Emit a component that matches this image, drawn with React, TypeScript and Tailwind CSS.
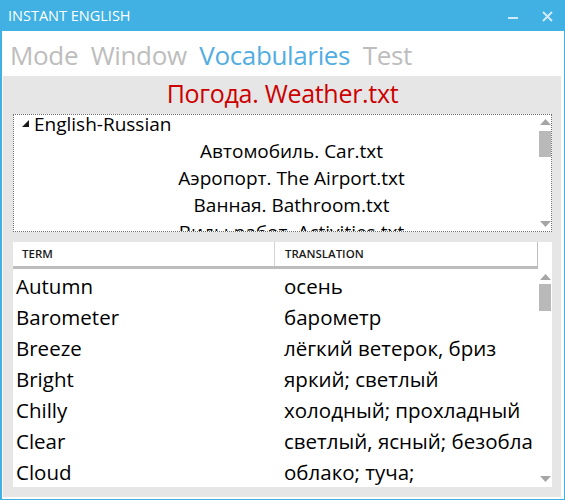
import React from "react";

function UpArrow() {
  return (
    <svg width="11" height="6" viewBox="0 0 11 6" className="block shrink-0">
      <polygon points="5.5,0 11,6 0,6" fill="#a6a6a6" />
    </svg>
  );
}
function DownArrow() {
  return (
    <svg width="11" height="6" viewBox="0 0 11 6" className="block shrink-0">
      <polygon points="0,0 11,0 5.5,6" fill="#a6a6a6" />
    </svg>
  );
}

const treeItems = [
  "Автомобиль. Car.txt",
  "Аэропорт. The Airport.txt",
  "Ванная. Bathroom.txt",
  "Виды работ. Activities.txt",
];

const rows: [string, string][] = [
  ["Autumn", "осень"],
  ["Barometer", "барометр"],
  ["Breeze", "лёгкий ветерок, бриз"],
  ["Bright", "яркий; светлый"],
  ["Chilly", "холодный; прохладный"],
  ["Clear", "светлый, ясный; безоблачный"],
  ["Cloud", "облако; туча;"],
];

export default function App() {
  return (
    <div className="w-[565px] h-[500px] flex flex-col bg-white overflow-hidden font-['Open_Sans','Noto_Sans',sans-serif] text-black">
      {/* Title bar */}
      <div className="h-[31px] shrink-0 bg-[#41b0e3] flex items-start">
        <span className="pl-[8px] text-[14.5px] leading-[31px] text-white">INSTANT ENGLISH</span>
        <div className="flex-1" />
        <div className="mt-[17px] w-[10px] h-[2px] bg-[#cfeaf8]" />
        <svg width="11" height="11" viewBox="0 0 11 11" className="mt-[11px] ml-[24px] mr-[12px]">
          <path d="M1 1 L10 10 M10 1 L1 10" stroke="#cfeaf8" strokeWidth="2" />
        </svg>
      </div>

      {/* Window body */}
      <div className="flex-1 min-h-0 flex flex-col border-l-2 border-r border-b border-[#41b0e3] pl-px pr-[3px] pb-[2px]">
        {/* Menu */}
        <div className="h-[45px] shrink-0 pt-[6px] pl-[7px] flex gap-[12.5px] text-[26px] leading-[36px] tracking-[-0.35px] text-[#bdbdbd]">
          <span>Mode</span>
          <span>Window</span>
          <span className="text-[#52ade2]">Vocabularies</span>
          <span>Test</span>
        </div>

        {/* Gray panel */}
        <div className="flex-1 min-h-0 bg-[#e6e6e6] flex flex-col pl-[10px] pr-[9px] pb-[10px]">
          <div className="h-[38px] shrink-0 pt-[2px] text-center text-[#cc0000] text-[25px] leading-[30px] tracking-[-0.3px]">
            Погода. Weather.txt
          </div>

          {/* Tree box */}
          <div className="h-[118px] shrink-0 border border-dotted border-[#6e6e6e] bg-white flex">
            <div className="flex-1 min-w-0 flex flex-col overflow-hidden text-[19px] leading-[18px]">
              <div className="h-[27px] shrink-0 flex items-start pl-[8px]">
                <svg width="7" height="7" viewBox="0 0 7 7" className="mt-[5px] shrink-0">
                  <polygon points="7,0 7,7 0,7" fill="#1a1a1a" />
                </svg>
                <span className="ml-[5px] whitespace-nowrap">English-Russian</span>
              </div>
              {treeItems.map((t) => (
                <div key={t} className="h-[27px] shrink-0 pl-[30px] text-center whitespace-nowrap">
                  {t}
                </div>
              ))}
            </div>
            <div className="w-[12px] shrink-0 flex flex-col items-center pt-[4px] pb-[4px]">
              <UpArrow />
              <div className="mt-[6px] w-[12px] h-[26px] bg-[#b9b9b9]" />
              <div className="flex-1" />
              <DownArrow />
            </div>
          </div>

          {/* Table */}
          <div className="flex-1 min-h-0 mt-[10px] bg-white flex">
            <div className="w-[525px] shrink-0 flex flex-col min-h-0">
              <div className="h-[27px] shrink-0 border-b-[3px] border-r border-[#bdbdbd] flex text-[11.5px] leading-[24px] font-semibold text-[#1a1a1a]">
                <div className="w-[261px] shrink-0 pl-[9px]">TERM</div>
                <div className="flex-1 border-l border-[#d4d4d4] pl-[10px]">TRANSLATION</div>
              </div>
              <div className="flex-1 min-h-0 overflow-hidden pt-[2px] text-[20.5px] leading-[31px]">
                {rows.map(([a, b]) => (
                  <div key={a} className="h-[31px] flex">
                    <div className="w-[261px] shrink-0 pl-[3px] whitespace-nowrap">{a}</div>
                    <div className="w-[258px] shrink-0 pl-[10px] whitespace-nowrap overflow-hidden">{b}</div>
                  </div>
                ))}
              </div>
            </div>
            <div className="w-[14px] shrink-0 flex flex-col items-center pt-[32px] pb-[5px]">
              <UpArrow />
              <div className="mt-[4px] w-[12px] h-[27px] bg-[#b9b9b9]" />
              <div className="flex-1" />
              <DownArrow />
            </div>
          </div>
        </div>
      </div>
    </div>
  );
}
